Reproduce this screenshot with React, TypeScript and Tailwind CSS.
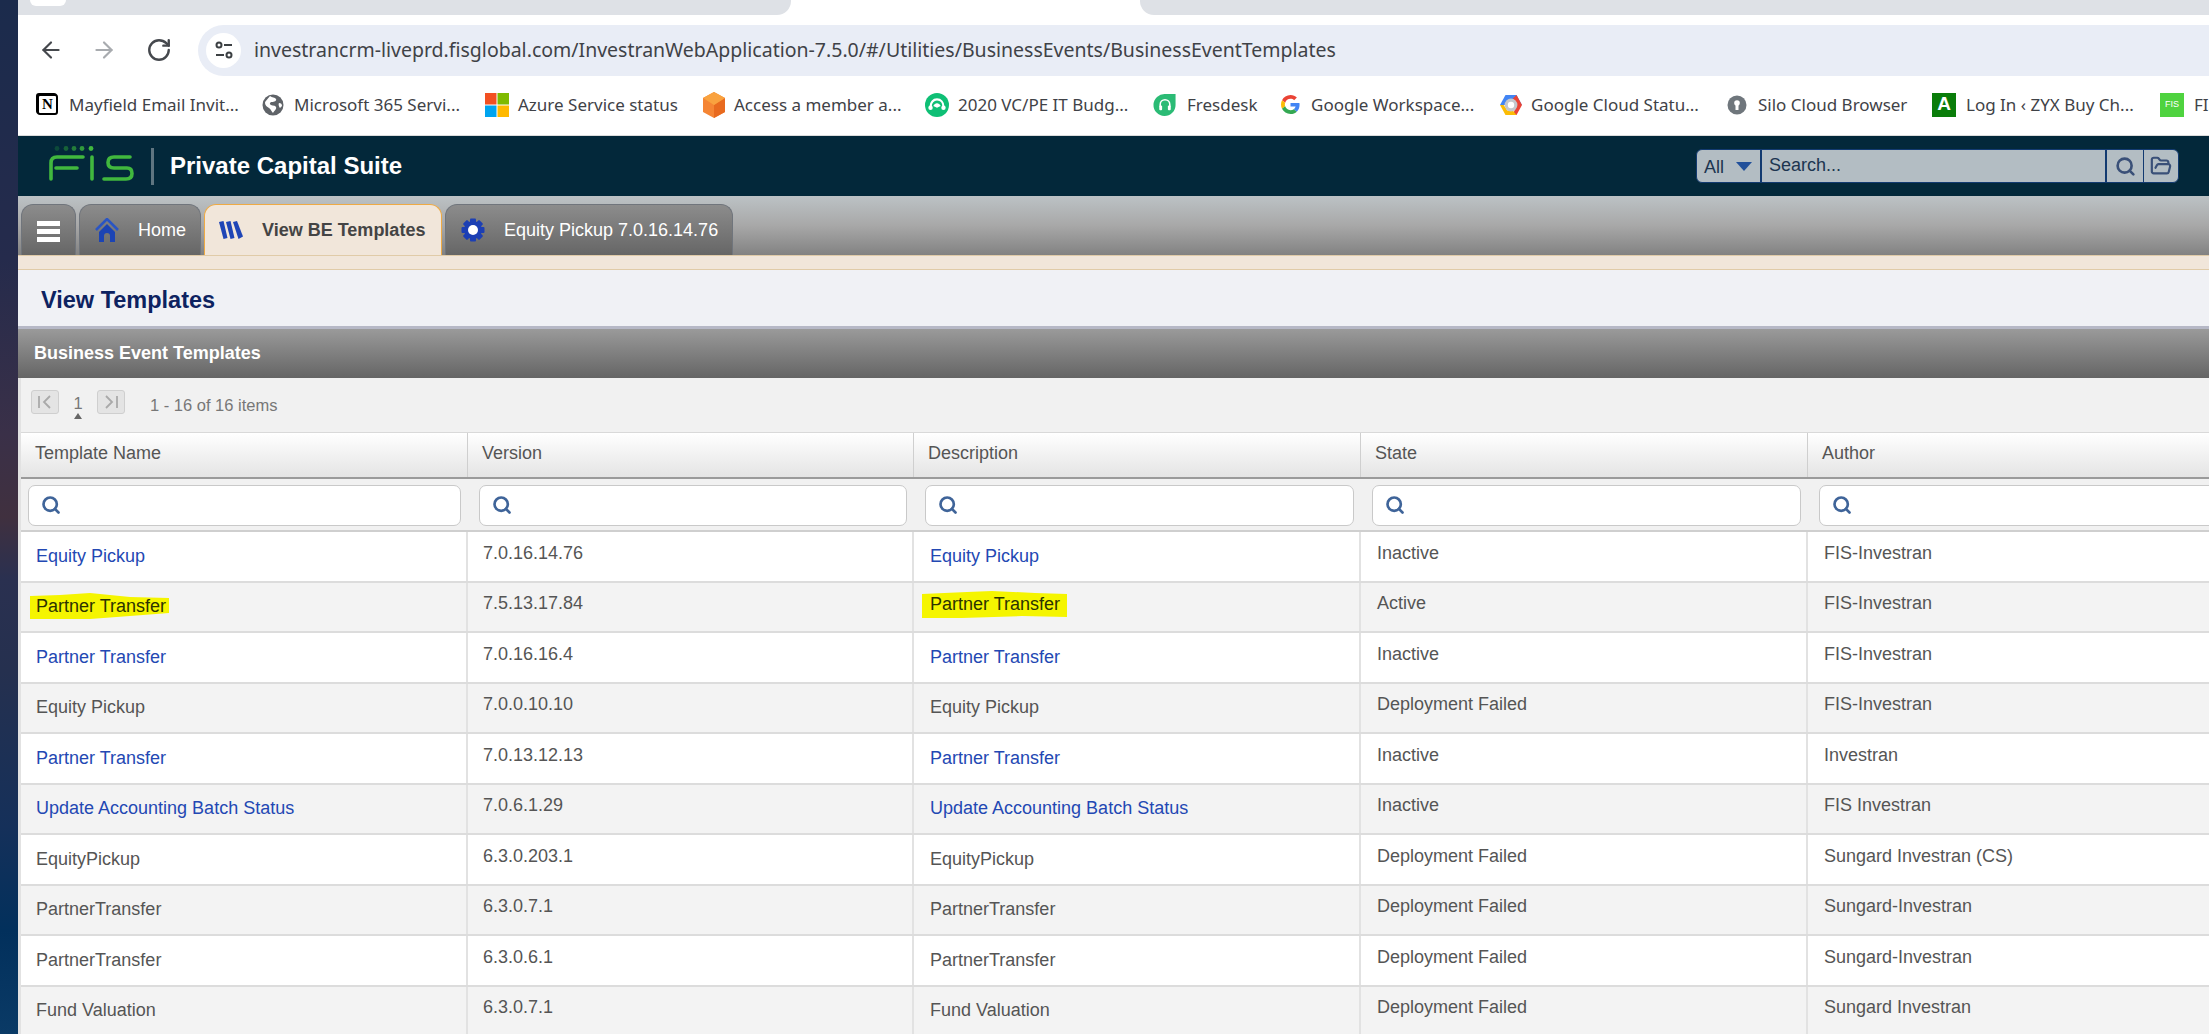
import React from "react";
import { ArrowLeft, ArrowRight, RotateCw, Search, FolderOpen } from "lucide-react";

const arial = "font-['Liberation_Sans',Arial,sans-serif]";
const chrome = "font-['Noto_Sans','Open_Sans',sans-serif]";
const cols = "grid grid-cols-[447px_446px_447px_447px_1fr]";

type Row = { name: string; version: string; state: string; author: string; link?: boolean; mark?: boolean };
const rows: Row[] = [
  { name: "Equity Pickup", version: "7.0.16.14.76", state: "Inactive", author: "FIS-Investran", link: true },
  { name: "Partner Transfer", version: "7.5.13.17.84", state: "Active", author: "FIS-Investran", mark: true },
  { name: "Partner Transfer", version: "7.0.16.16.4", state: "Inactive", author: "FIS-Investran", link: true },
  { name: "Equity Pickup", version: "7.0.0.10.10", state: "Deployment Failed", author: "FIS-Investran" },
  { name: "Partner Transfer", version: "7.0.13.12.13", state: "Inactive", author: "Investran", link: true },
  { name: "Update Accounting Batch Status", version: "7.0.6.1.29", state: "Inactive", author: "FIS Investran", link: true },
  { name: "EquityPickup", version: "6.3.0.203.1", state: "Deployment Failed", author: "Sungard Investran (CS)" },
  { name: "PartnerTransfer", version: "6.3.0.7.1", state: "Deployment Failed", author: "Sungard-Investran" },
  { name: "PartnerTransfer", version: "6.3.0.6.1", state: "Deployment Failed", author: "Sungard-Investran" },
  { name: "Fund Valuation", version: "6.3.0.7.1", state: "Deployment Failed", author: "Sungard Investran" },
];

const NotionIcon = () => (
  <span className="relative flex h-[21px] w-[21px] items-center justify-center rounded-[3px] border-2 border-black bg-white font-['Liberation_Serif',serif] text-[15px] font-bold leading-none text-black shadow-[-1px_-1px_0_#000]">N</span>
);
const GlobeIcon = () => (
  <svg width="22" height="22" viewBox="0 0 22 22"><circle cx="11" cy="11" r="10.5" fill="#5f6368" /><path d="M8 2c2 2 5 1 6 3s-2 3-4 3-3 2-1 3 4 0 5 2-2 4-3 6c-2-2-2-4-4-5S3 11 3 9s3-4 5-7zM17 9c2 0 3 1 3 3l-2 2c-1-1-2-4-1-5z" fill="#fff" /></svg>
);
const MsIcon = () => (
  <svg width="24" height="24" viewBox="0 0 24 24"><rect width="11.5" height="11.5" fill="#f25022" /><rect x="12.5" width="11.5" height="11.5" fill="#7fba00" /><rect y="12.5" width="11.5" height="11.5" fill="#00a4ef" /><rect x="12.5" y="12.5" width="11.5" height="11.5" fill="#ffb900" /></svg>
);
const CubeIcon = () => (
  <svg width="24" height="26" viewBox="0 0 24 26"><path d="M12 0l11 6v14l-11 6-11-6V6z" fill="#f58534" /><path d="M12 13l11-7v14l-11 6z" fill="#e86a1f" /><path d="M12 0l11 6-11 7L1 6z" fill="#f9a23f" /></svg>
);
const SurveyIcon = () => (
  <svg width="24" height="24" viewBox="0 0 26 26"><circle cx="13" cy="13" r="13" fill="#0fbf75" /><path d="M6 15c0-5 3-8 7-8s7 3 7 8" fill="none" stroke="#fff" strokeWidth="2.4" /><circle cx="6" cy="16" r="2.4" fill="#fff" /><circle cx="20" cy="16" r="2.4" fill="#fff" /><path d="M9 14c1-2 2.500-3 4-3s3 1 4 3l-4 2z" fill="#fff" /></svg>
);
const FreshIcon = () => (
  <svg width="24" height="24" viewBox="0 0 24 25"><path d="M12 1h11v11.500A11.500 11.500 0 1 1 12 1z" fill="#2bbb75" /><path d="M7 14v-2a5 5 0 0 1 10 0v2" fill="none" stroke="#fff" strokeWidth="1.600" /><rect x="6" y="13" width="3" height="5" rx="1" fill="#fff" /><rect x="15" y="13" width="3" height="5" rx="1" fill="#fff" /></svg>
);
const GoogleIcon = () => (
  <svg width="19" height="19" viewBox="0 0 48 48"><path fill="#EA4335" d="M24 9.500c3.500 0 6.700 1.200 9.200 3.600l6.900-6.900C35.900 2.400 30.500 0 24 0 14.600 0 6.500 5.400 2.600 13.200l8 6.200C12.400 13.700 17.700 9.500 24 9.500z" /><path fill="#4285F4" d="M46.900 24.500c0-1.600-.1-3.100-.4-4.500H24v9h12.900c-.6 3-2.200 5.500-4.700 7.200l7.700 6c4.500-4.200 7-10.300 7-17.700z" /><path fill="#FBBC05" d="M10.500 28.600c-.5-1.500-.8-3-.8-4.600s.3-3.200.8-4.600l-8-6.200C.9 16.500 0 20.100 0 24s.9 7.500 2.600 10.800l7.900-6.200z" /><path fill="#34A853" d="M24 48c6.500 0 11.900-2.100 15.900-5.800l-7.700-6c-2.200 1.400-4.900 2.300-8.200 2.300-6.300 0-11.600-4.200-13.500-9.900l-8 6.200C6.500 42.600 14.600 48 24 48z" /></svg>
);
const CloudIcon = () => (
  <svg width="24" height="22" viewBox="0 0 24 24"><path d="M6 1h12l6 11H0z" fill="#4285f4" /><path d="M18 1l6 11-6 11h-4l4-11-4-7z" fill="#ea4335" /><path d="M0 12l6 11h12l-4-5H8l-4-6z" fill="#fbbc05" /><circle cx="12" cy="12" r="7" fill="#c4c7cc" /><circle cx="12" cy="12" r="3.500" fill="#fff" /></svg>
);
const SiloIcon = () => (
  <svg width="20" height="20" viewBox="0 0 20 20"><circle cx="10" cy="10" r="9.500" fill="#6f767c" /><circle cx="10" cy="8" r="2.800" fill="#fff" /><rect x="8.500" y="8.500" width="3" height="6.500" fill="#fff" /></svg>
);
const Glyph = ({ bg, children, cls }: { bg: string; children: React.ReactNode; cls: string }) => (
  <span className={`flex h-[24px] w-[24px] items-center justify-center ${bg} ${cls}`}>{children}</span>
);

const bookmarks: { icon: React.ReactNode; text: string; w: string; gap: string }[] = [
  { icon: <NotionIcon />, text: "Mayfield Email Invit...", w: "w-[167px]", gap: "gap-[11px]" },
  { icon: <GlobeIcon />, text: "Microsoft 365 Servi...", w: "w-[165px]", gap: "gap-[10px]" },
  { icon: <MsIcon />, text: "Azure Service status", w: "w-[158px]", gap: "gap-[9px]" },
  { icon: <CubeIcon />, text: "Access a member a...", w: "w-[165px]", gap: "gap-[8px]" },
  { icon: <SurveyIcon />, text: "2020 VC/PE IT Budg...", w: "w-[169px]", gap: "gap-[9px]" },
  { icon: <FreshIcon />, text: "Fresdesk", w: "w-[68px]", gap: "gap-[10px]" },
  { icon: <GoogleIcon />, text: "Google Workspace...", w: "w-[162px]", gap: "gap-[11px]" },
  { icon: <CloudIcon />, text: "Google Cloud Statu...", w: "w-[170px]", gap: "gap-[8px]" },
  { icon: <SiloIcon />, text: "Silo Cloud Browser", w: "w-[148px]", gap: "gap-[11px]" },
  { icon: <Glyph bg="bg-[#0a7d0a]" cls="font-['Liberation_Sans',sans-serif] text-[19px] font-bold text-white">A</Glyph>, text: "Log In ‹ ZYX Buy Ch...", w: "w-[168px]", gap: "gap-[10px]" },
  { icon: <Glyph bg="bg-[#4fd33f]" cls="font-['Liberation_Sans',sans-serif] text-[9px] text-white">FIS</Glyph>, text: "FIS", w: "w-[40px]", gap: "gap-[10px]" },
];

const FisLogo = () => (
  <svg width="90" height="40" viewBox="0 0 90 40" className="shrink-0">
    <circle cx="9" cy="2.500" r="2.400" fill="#0d4a3a" />
    <circle cx="18" cy="2.500" r="2.400" fill="#176238" />
    <circle cx="26" cy="2.500" r="2.400" fill="#247d3a" />
    <circle cx="34" cy="2.500" r="2.400" fill="#319a3c" />
    <circle cx="43" cy="2.500" r="2.400" fill="#41b83e" />
    <g fill="none" stroke="#41b83e" strokeWidth="3.600" strokeLinecap="round">
      <path d="M3 33V17c0-4 2-6 6-6h26" />
      <path d="M8 22h21" />
      <path d="M44 11v22" />
      <path d="M82 11H66c-4 0-6 2-6 5.500s2 5.500 6 5.500h13c3 0 5 2 5 5.500s-2 5.500-6 5.500H56" />
    </g>
  </svg>
);

const HomeIcon = () => (
  <svg width="24" height="24" viewBox="0 0 24 24" className="shrink-0">
    <path d="M1 12L12 1l11 11" fill="none" stroke="#2a55c4" strokeWidth="2.600" />
    <path d="M4 14l8-8 8 8v10h-5v-6a3 3 0 0 0-6 0v6H4z" fill="#1c44b4" />
  </svg>
);
const LinesIcon = () => (
  <svg width="24" height="18" viewBox="0 0 24 18" className="shrink-0" fill="#1f45b6">
    <path d="M0 1l4.500-1L8.500 17l-4 1z" /><path d="M7 1l4.500-1L15.500 17l-4 1z" /><path d="M14 1l4-1L24 15.500 19.500 18z" />
  </svg>
);
const GearIcon = () => (
  <svg width="24" height="24" viewBox="0 0 24 24" className="shrink-0">
    <circle cx="12" cy="12" r="9" fill="#1c3fb4" />
    {[0, 45, 90, 135].map((a) => (
      <rect key={a} x="9" y="0.500" width="6" height="23" rx="1" fill="#1c3fb4" transform={`rotate(${a} 12 12)`} />
    ))}
    <circle cx="12" cy="12" r="5" fill="#fff" />
  </svg>
);

const TuneIcon = () => (
  <svg width="20" height="20" viewBox="0 0 20 20" fill="none" stroke="#3c4043" strokeWidth="2">
    <circle cx="5" cy="5" r="2.500" /><path d="M10 5h8" /><circle cx="15" cy="15" r="2.500" /><path d="M2 15h8" />
  </svg>
);

const Filter = ({ cls }: { cls: string }) => (
  <div className={`${cls} pr-[7px]`}>
    <div className="flex h-[41px] items-center rounded-[7px] border border-[#c9c9c9] bg-white pb-[2px] pl-[12px]">
      <Search size={20} strokeWidth={3.2} className="text-[#3f6499]" />
    </div>
  </div>
);

const Head = ({ children, last }: { children: string; last?: boolean }) => (
  <div className={`flex items-center pb-[4px] pl-[14px] text-[18px] text-[#555] ${last ? "" : "border-r border-[#cfcfcf]"}`}>{children}</div>
);

const Mark = ({ children, points, cls }: { children: string; points: string; cls: string }) => (
  <span className="relative inline-block">
    <svg width="150" height="30" viewBox="0 0 150 30" className={`absolute ${cls}`}><polygon points={points} fill="#f5f500" /></svg>
    <span className="relative text-[#2c3300]">{children}</span>
  </span>
);

export default function App() {
  return (
    <div className={`flex h-[1034px] w-[2209px] overflow-hidden ${arial}`}>
      <div className="w-[18px] shrink-0 bg-[linear-gradient(180deg,#1b2b4c_0%,#252b4c_25%,#3a3048_42%,#40303f_50%,#2a3050_56%,#25304f_65%,#15305a_80%,#02305c_90%,#0a3a66_100%)]" />
      <div className="flex min-w-0 flex-1 flex-col bg-white">
        <div className="flex h-[15px] shrink-0 bg-white">
          <div className="relative h-full w-[773px] rounded-br-[14px] bg-[#dee1e6]">
            <div className="absolute left-[12px] top-0 h-[6px] w-[36px] rounded-b-[8px] bg-white" />
          </div>
          <div className="w-[349px]" />
          <div className="flex-1 rounded-bl-[14px] bg-[#dee1e6]" />
        </div>
        <div className="flex h-[70px] shrink-0 items-center text-[#44474c]">
          <ArrowLeft size={26} strokeWidth={2} className="ml-[20px] text-[#45484d]" />
          <ArrowRight size={26} strokeWidth={2} className="ml-[27px] text-[#a8abaf]" />
          <RotateCw size={26} strokeWidth={2.2} className="ml-[29px] text-[#45484d]" />
          <div className="ml-[26px] flex h-[51px] flex-1 items-center rounded-l-[26px] bg-[#e9edf6] pl-[8px]">
            <div className="flex h-[35px] w-[35px] items-center justify-center rounded-full bg-white"><TuneIcon /></div>
            <span className={`ml-[13px] whitespace-nowrap text-[19.500px] text-[#3f4247] ${chrome}`}>investrancrm-liveprd.fisglobal.com/InvestranWebApplication-7.5.0/#/Utilities/BusinessEvents/BusinessEventTemplates</span>
          </div>
        </div>
        <div className={`flex h-[51px] shrink-0 items-center gap-[26px] overflow-hidden whitespace-nowrap border-b border-[#dcdcdc] pb-[11px] pl-[19px] text-[17px] text-[#3f4247] ${chrome}`}>
          {bookmarks.map((b) => (
            <div key={b.text} className={`flex shrink-0 items-center ${b.gap}`}>
              {b.icon}
              <span className={b.w}>{b.text}</span>
            </div>
          ))}
        </div>
        <div className="flex h-[60px] shrink-0 items-center bg-[#03283a] pl-[30px]">
          <FisLogo />
          <div className="ml-[13px] h-[37px] w-[3px] bg-[#5f7580]" />
          <div className="ml-[16px] text-[24px] font-bold text-white">Private Capital Suite</div>
          <div className="ml-auto mr-[30px] flex h-[34px] w-[483px] items-stretch overflow-hidden rounded-[6px] border border-[#123a70] bg-[#b3bdc3] text-[18px] text-[#1c3550]">
            <div className="flex w-[65px] items-center gap-[12px] border-r-2 border-[#123a70] pl-[7px]">
              <span className="pt-[3px]">All</span>
              <span className="h-0 w-0 border-x-[8px] border-t-[9px] border-x-transparent border-t-[#21509a]" />
            </div>
            <div className="flex flex-1 items-center border-r-2 border-[#123a70] pb-[1px] pl-[7px]">Search...</div>
            <div className="flex w-[37px] items-center justify-center border-r border-[#123a70]"><Search size={21} strokeWidth={3} className="text-[#3a5078]" /></div>
            <div className="flex w-[34px] items-center justify-center"><FolderOpen size={22} strokeWidth={2.4} className="text-[#3a5078]" /></div>
          </div>
        </div>
        <div className="flex h-[59px] shrink-0 items-end gap-[3px] bg-[linear-gradient(180deg,#bcc2c5_0%,#a8a8a8_50%,#828282_100%)] pl-[3px]">
          <div className="flex h-[51px] w-[55px] items-center justify-center rounded-t-[12px] border border-b-0 border-[#70757c] bg-[linear-gradient(180deg,#8c8c8c,#666)]">
            <div className="flex w-[23px] flex-col gap-[3px] pt-[2px]">
              <div className="h-[5px] bg-white" /><div className="h-[5px] bg-white" /><div className="h-[5px] bg-white" />
            </div>
          </div>
          <div className="flex h-[51px] w-[122px] items-center rounded-t-[12px] border border-b-0 border-[#70757c] bg-[linear-gradient(180deg,#8c8c8c,#666)] pl-[15px] text-[18px] text-white">
            <HomeIcon /><span className="ml-[19px]">Home</span>
          </div>
          <div className="flex h-[51px] w-[238px] items-center rounded-t-[12px] border border-b-0 border-[#eeaa44] bg-[#f1e6da] pl-[14px] text-[18px] font-bold text-[#444]">
            <LinesIcon /><span className="ml-[19px]">View BE Templates</span>
          </div>
          <div className="flex h-[51px] w-[288px] items-center rounded-t-[12px] border border-b-0 border-[#70757c] bg-[linear-gradient(180deg,#8c8c8c,#666)] pl-[15px] text-[18px] text-white">
            <GearIcon /><span className="ml-[19px]">Equity Pickup 7.0.16.14.76</span>
          </div>
        </div>
        <div className="h-[15px] shrink-0 border-y border-[#e0cba8] bg-[#f1e6da]" />
        <div className="flex h-[59px] shrink-0 items-center border-b-[3px] border-[#b6b8c6] bg-[#f0f1f5] pl-[23px] pt-[5px] text-[23.500px] font-bold text-[#0d2260]">View Templates</div>
        <div className="flex h-[49px] shrink-0 items-center bg-[linear-gradient(180deg,#9a9a9a,#656565)] pl-[16px] text-[18px] font-bold text-white">Business Event Templates</div>
        <div className="min-h-0 flex-1 overflow-hidden border-l-[3px] border-[#e2e2e2]">
          <div className="flex h-[54px] items-start bg-[#f1f1f1] pl-[10px] pt-[12px] text-[#777]">
            <div className="flex h-[24px] w-[28px] items-center justify-center rounded-[3px] border border-[#cfcfcf] bg-[#e4e4e4] text-[#a9a9a9]">
              <svg width="18" height="14" viewBox="0 0 18 14" fill="none" stroke="currentColor" strokeWidth="1.800"><path d="M3 1v12M14 1L8 7l6 6" /></svg>
            </div>
            <div className="flex w-[38px] flex-col items-center pt-[3px] text-[16.500px] leading-[20px]">
              1
              <span className="h-0 w-0 border-x-[4.5px] border-b-[6px] border-x-transparent border-b-[#666]" />
            </div>
            <div className="flex h-[24px] w-[28px] items-center justify-center rounded-[3px] border border-[#cfcfcf] bg-[#e4e4e4] text-[#a9a9a9]">
              <svg width="18" height="14" viewBox="0 0 18 14" fill="none" stroke="currentColor" strokeWidth="1.800"><path d="M15 1v12M4 1l6 6-6 6" /></svg>
            </div>
            <span className="ml-[25px] pt-[3px] text-[16.500px] leading-[24px]">1 - 16 of 16 items</span>
          </div>
          <div className={`${cols} h-[47px] border-y border-b-2 border-t-[#d9d9d9] border-b-[#9a9a9a] bg-[linear-gradient(180deg,#ffffff,#e4e4e4)]`}>
            <Head>Template Name</Head><Head>Version</Head><Head>Description</Head><Head>State</Head><Head last>Author</Head>
          </div>
          <div className={`${cols} h-[53px] items-start border-b-2 border-[#cfcfcf] bg-[#f1f1f1] pt-[6px]`}>
            <Filter cls="pl-[7px]" /><Filter cls="pl-[11px]" /><Filter cls="pl-[11px]" /><Filter cls="pl-[11px]" /><Filter cls="pl-[11px] -mr-[200px]" />
          </div>
          {rows.map((r, i) => {
            const main = r.link ? "text-[#2348b3]" : "";
            return (
              <div key={i} className={`${cols} h-[50.500px] border-b-2 border-[#dcdcdc] text-[18px] leading-[24px] text-[#555] ${i % 2 ? "bg-[#f3f3f3]" : "bg-white"}`}>
                <div className={`border-r-2 border-[#e2e2e2] pl-[15px] pt-[11.500px] ${main}`}>
                  {r.mark ? <Mark cls="-left-[6px] -top-[1px]" points="0,3 30,2 60,0 100,4 139,5 139,20 100,23 60,26 0,26">{r.name}</Mark> : r.name}
                </div>
                <div className="border-r-2 border-[#e2e2e2] pl-[15px] pt-[8.500px]">{r.version}</div>
                <div className={`border-r-2 border-[#e2e2e2] pl-[16px] ${r.mark ? "pt-[9px]" : "pt-[11.500px]"} ${main}`}>
                  {r.mark ? <Mark cls="-left-[8px] -top-[1px]" points="0,3 45,1 70,0 113,2 145,3 145,26 100,25 40,27 0,27">{r.name}</Mark> : r.name}
                </div>
                <div className="border-r-2 border-[#e2e2e2] pl-[16px] pt-[8.500px]">{r.state}</div>
                <div className="pl-[16px] pt-[8.500px]">{r.author}</div>
              </div>
            );
          })}
        </div>
      </div>
    </div>
  );
}
